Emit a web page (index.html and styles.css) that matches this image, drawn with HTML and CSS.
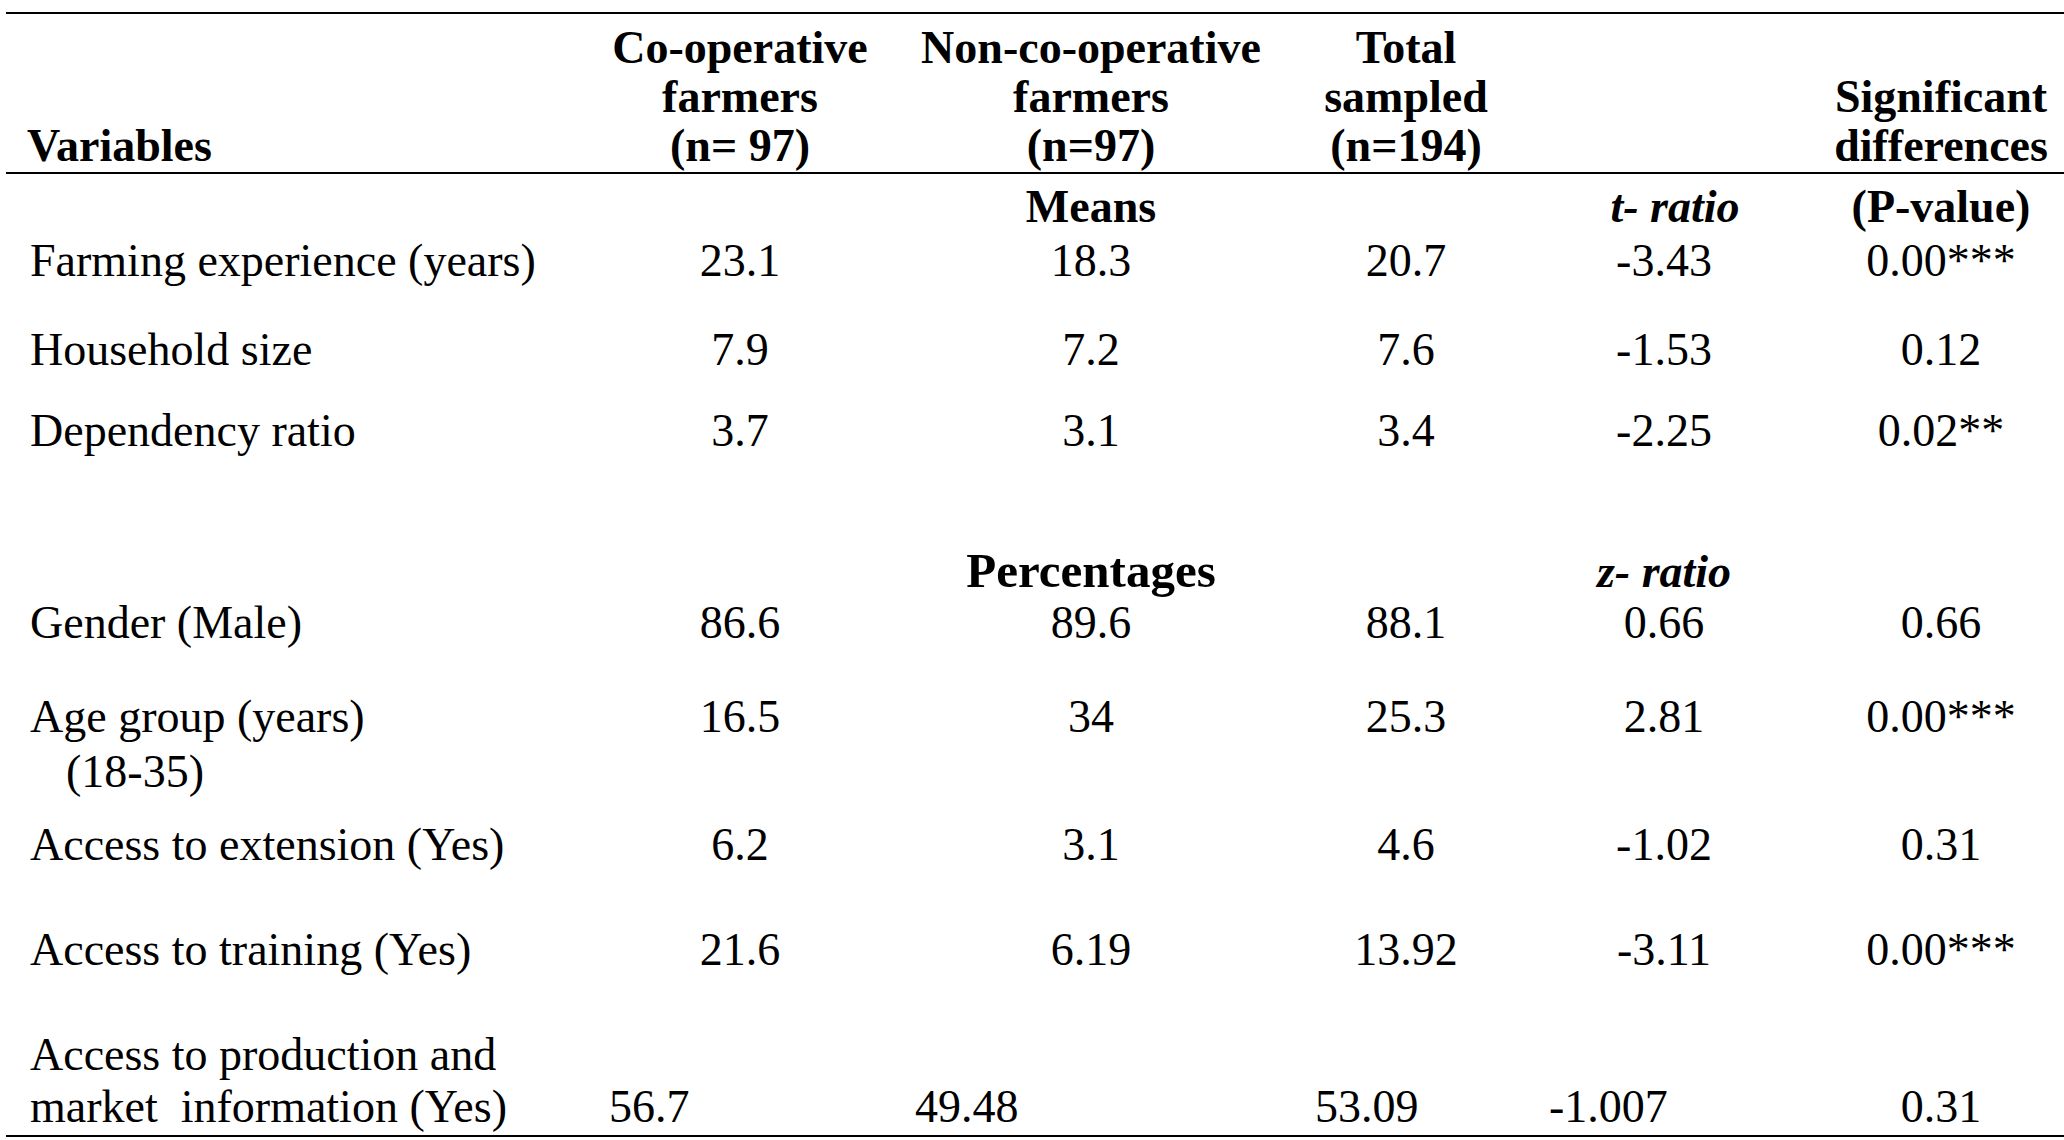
FILE: index.html
```html
<!DOCTYPE html>
<html lang="en">
<head>
<meta charset="utf-8">
<title>Farmer characteristics</title>
<link rel="stylesheet" href="styles.css">
</head>
<body>
<div class="table">
  <div class="row head">
    <div class="cell var">Variables</div>
    <div class="cell">Co-operative<br>farmers<br>(n= 97)</div>
    <div class="cell">Non-co-operative<br>farmers<br>(n=97)</div>
    <div class="cell">Total<br>sampled<br>(n=194)</div>
    <div class="cell"></div>
    <div class="cell">Significant<br>differences</div>
  </div>

  <div class="row sub r-means">
    <div class="cell"></div>
    <div class="cell"></div>
    <div class="cell">Means</div>
    <div class="cell"></div>
    <div class="cell ital tr">t- ratio</div>
    <div class="cell">(P-value)</div>
  </div>

  <div class="row r-farm">
    <div class="cell var">Farming experience (years)</div>
    <div class="cell">23.1</div>
    <div class="cell">18.3</div>
    <div class="cell">20.7</div>
    <div class="cell">-3.43</div>
    <div class="cell">0.00***</div>
  </div>

  <div class="row r-house">
    <div class="cell var">Household size</div>
    <div class="cell">7.9</div>
    <div class="cell">7.2</div>
    <div class="cell">7.6</div>
    <div class="cell">-1.53</div>
    <div class="cell">0.12</div>
  </div>

  <div class="row r-dep">
    <div class="cell var">Dependency ratio</div>
    <div class="cell">3.7</div>
    <div class="cell">3.1</div>
    <div class="cell">3.4</div>
    <div class="cell">-2.25</div>
    <div class="cell">0.02**</div>
  </div>

  <div class="row sub r-pct">
    <div class="cell"></div>
    <div class="cell"></div>
    <div class="cell big">Percentages</div>
    <div class="cell"></div>
    <div class="cell ital">z- ratio</div>
    <div class="cell"></div>
  </div>

  <div class="row r-gender">
    <div class="cell var">Gender (Male)</div>
    <div class="cell">86.6</div>
    <div class="cell">89.6</div>
    <div class="cell">88.1</div>
    <div class="cell">0.66</div>
    <div class="cell">0.66</div>
  </div>

  <div class="row r-age">
    <div class="cell var">Age group (years)<span class="indent">(18-35)</span></div>
    <div class="cell">16.5</div>
    <div class="cell">34</div>
    <div class="cell">25.3</div>
    <div class="cell">2.81</div>
    <div class="cell">0.00***</div>
  </div>

  <div class="row r-ext">
    <div class="cell var">Access to extension (Yes)</div>
    <div class="cell">6.2</div>
    <div class="cell">3.1</div>
    <div class="cell">4.6</div>
    <div class="cell">-1.02</div>
    <div class="cell">0.31</div>
  </div>

  <div class="row r-train">
    <div class="cell var">Access to training (Yes)</div>
    <div class="cell">21.6</div>
    <div class="cell">6.19</div>
    <div class="cell">13.92</div>
    <div class="cell">-3.11</div>
    <div class="cell">0.00***</div>
  </div>

  <div class="row r-info">
    <div class="cell var">Access to production and<br><span class="pre">market  information (Yes)</span></div>
    <div class="cell low l1">56.7</div>
    <div class="cell low l2">49.48</div>
    <div class="cell low l3">53.09</div>
    <div class="cell low l4">-1.007</div>
    <div class="cell low">0.31</div>
  </div>
</div>
</body>
</html>
```

FILE: styles.css
```css
html, body {
  margin: 0;
  padding: 0;
  background: #ffffff;
}

body {
  font-family: "Liberation Serif", "Times New Roman", serif;
  font-size: 46px;
  color: #000000;
}

.table {
  margin-top: 12px;
  margin-left: 6px;
  width: 2058px;
}

.row {
  display: grid;
  grid-template-columns: 594px 280px 422px 208px 308px 246px;
  align-items: start;
  line-height: 50px;
}

.cell {
  text-align: center;
  white-space: nowrap;
}

.cell.var {
  text-align: left;
  padding-left: 24px;
}

/* header */
.head {
  border-top: 2px solid #000;
  border-bottom: 2px solid #000;
  padding-top: 9px;
  padding-bottom: 2px;
  font-weight: bold;
  line-height: 49px;
  align-items: end;
}

.head .var {
  padding-left: 21px;
}

/* sub headings */
.sub {
  font-weight: bold;
  align-items: baseline;
}

.ital {
  font-style: italic;
}

.tr {
  padding-left: 22px;
}

.big {
  font-size: 49px;
}

/* row spacing */
.r-means { margin-top: 7.5px; }
.r-farm { margin-top: 4px; }
.r-house { margin-top: 39px; }
.r-dep { margin-top: 31px; }
.r-pct { margin-top: 90px; }
.r-gender { margin-top: 1px; }
.r-age { margin-top: 41.5px; line-height: 55px; }
.r-ext { margin-top: 20.5px; }
.r-train { margin-top: 55px; }

.r-info {
  margin-top: 54px;
  line-height: 52px;
  padding-bottom: 2.5px;
  border-bottom: 2px solid #000;
}

.indent {
  display: block;
  padding-left: 36px;
}

.pre {
  white-space: pre;
}

.low {
  padding-top: 52px;
}

.low.l1 { text-align: left; padding-left: 9px; }
.low.l2 { text-align: left; padding-left: 35px; }
.low.l3 { text-align: left; padding-left: 13px; }
.low.l4 { text-align: left; padding-left: 39px; }
```
